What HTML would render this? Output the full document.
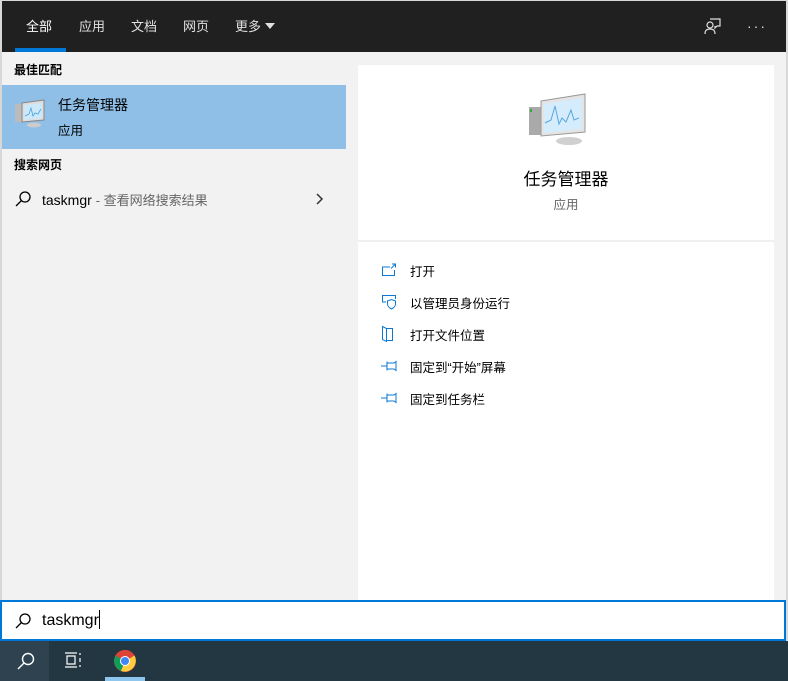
<!DOCTYPE html>
<html><head><meta charset="utf-8"><style>
*{margin:0;padding:0;box-sizing:border-box}
body{width:788px;height:681px;overflow:hidden;background:#d8d8d8;font-family:"Liberation Sans","Noto Sans CJK SC",sans-serif;position:relative}
.abs{position:absolute}
#hdr{left:2px;top:1px;width:784px;height:51px;background:#202020}
.tab{position:absolute;top:15px;color:#e0e0e0;font-size:13px}
#body{left:2px;top:52px;width:784px;height:549px;background:#f2f2f2}
#right{left:358px;top:65px;width:416px;height:536px;background:#fff}
.sec{position:absolute;left:14px;font-size:12px;font-weight:bold;color:#000}
.act{position:absolute;left:410px;font-size:12.5px;color:#000}
.ico{position:absolute;left:381px}
</style></head><body>
<div class="abs" id="hdr">
 <div class="tab" style="left:24px;color:#fff">全部</div>
 <div class="abs" style="left:13px;top:47px;width:51px;height:4px;background:#0078d7"></div>
 <div class="tab" style="left:77px">应用</div>
 <div class="tab" style="left:129px">文档</div>
 <div class="tab" style="left:181px">网页</div>
 <div class="tab" style="left:233px">更多 <span style="display:inline-block;width:0;height:0;border-left:5px solid transparent;border-right:5px solid transparent;border-top:6px solid #e0e0e0;vertical-align:2px"></span></div>
 <svg class="abs" style="left:700px;top:15px" width="20" height="20" viewBox="0 0 20 20" fill="none" stroke="#e0e0e0" stroke-width="1.2"><path d="M8 3h10v7h-3l-2 2v-2"/><circle cx="8" cy="9" r="3"/><path d="M3 18c0-4 2-5 5-5s5 1 5 5"/></svg>
 <div class="abs" style="left:745px;top:17px;color:#e0e0e0;font-size:14px;letter-spacing:2px">···</div>
</div>
<div class="abs" id="body"></div>
<div class="sec" style="top:61px">最佳匹配</div>
<div class="abs" style="left:2px;top:85px;width:344px;height:64px;background:#8fbfe6"></div>
<svg class="abs" style="left:14px;top:98px" width="32" height="30" viewBox="0 0 32 30"><rect x="1" y="6" width="8" height="18" fill="#bbb"/><path d="M8 5l22-3v20l-22 2z" fill="#ddd" stroke="#888"/><path d="M10 7l18-2v15l-18 2z" fill="#cde8f8"/><path d="M11 18l4-2 2-6 2 8 2-3 3 1 3-5" stroke="#4aa3df" fill="none" stroke-width=".8"/><ellipse cx="20" cy="27" rx="7" ry="2.5" fill="#ccc"/></svg>
<div class="abs" style="left:58px;top:95px;font-size:14px">任务管理器</div>
<div class="abs" style="left:58px;top:120px;font-size:12.5px">应用</div>
<div class="sec" style="top:156px">搜索网页</div>
<svg class="abs" style="left:14px;top:190px" width="18" height="18" viewBox="0 0 18 18" fill="none" stroke="#000" stroke-width="1.3"><circle cx="11" cy="7" r="5"/><path d="M7.5 10.5L2 16"/></svg>
<div class="abs" style="left:42px;top:190px;font-size:14px">taskmgr <span style="color:#666;font-size:13px">- 查看网络搜索结果</span></div>
<svg class="abs" style="left:315px;top:192px" width="10" height="14" viewBox="0 0 10 14" fill="none" stroke="#333" stroke-width="1.5"><path d="M2 2l5 5-5 5"/></svg>
<div class="abs" id="right"></div>
<svg class="abs" style="left:527px;top:93px" width="64" height="52" viewBox="0 0 64 52"><rect x="2" y="14" width="12" height="28" fill="#aaa"/><rect x="3" y="16" width="2" height="3" fill="#3a3"/><path d="M14 8l44-7v38l-44 4z" fill="#e4e4e4" stroke="#999"/><path d="M17 11l38-6v31l-38 4z" fill="#d4ecfb"/><path d="M18 30l6-3 4-14 4 18 3-6 4 4 5-12 3 10 5-2" stroke="#5aa8e0" fill="none"/><ellipse cx="42" cy="48" rx="13" ry="4" fill="#d0d0d0"/></svg>
<div class="abs" style="left:0;width:1132px;top:165px;text-align:center;font-size:17px;color:#000">任务管理器</div>
<div class="abs" style="left:0;width:1132px;top:194px;text-align:center;font-size:12.5px;color:#666">应用</div>
<div class="abs" style="left:358px;top:240px;width:416px;height:2px;background:#f0f0f0"></div>
<svg class="ico" style="top:263px" width="16" height="14" viewBox="0 0 16 14" fill="none" stroke="#0a78d4"><path d="M9 4H1.5v8.5h12V7"/><path d="M11 1h3.5v3.5M14.5 1L10 5.5"/></svg>
<div class="act" style="top:261px">打开</div>
<svg class="ico" style="top:294px" width="16" height="16" viewBox="0 0 16 16" fill="none" stroke="#0a78d4"><path d="M5 8H1.5V1.5h13V5"/><path d="M6.5 7l4-1.5 4 1.5v3c0 2-2 4-4 5-2-1-4-3-4-5z"/></svg>
<div class="act" style="top:293px">以管理员身份运行</div>
<svg class="ico" style="top:325px" width="14" height="18" viewBox="0 0 14 18" fill="none" stroke="#0a78d4"><path d="M1.5 1.5l4 2v13l-4-2zM5.5 3.5h6v12h-6"/></svg>
<div class="act" style="top:325px">打开文件位置</div>
<svg class="ico" style="top:360px" width="18" height="12" viewBox="0 0 18 12" fill="none" stroke="#0a78d4"><path d="M0 6h6M6 1.5v9M6 3h7l2-1.5v9L13 9H6"/></svg>
<div class="act" style="top:357px">固定到“开始”屏幕</div>
<svg class="ico" style="top:392px" width="18" height="12" viewBox="0 0 18 12" fill="none" stroke="#0a78d4"><path d="M0 6h6M6 1.5v9M6 3h7l2-1.5v9L13 9H6"/></svg>
<div class="act" style="top:389px">固定到任务栏</div>
<div class="abs" style="left:0;top:600px;width:786px;height:41px;background:#fff;border:2px solid #0078d7"></div>
<svg class="abs" style="left:14px;top:612px" width="18" height="18" viewBox="0 0 18 18" fill="none" stroke="#000" stroke-width="1.3"><circle cx="11" cy="7" r="5"/><path d="M7.5 10.5L2 16"/></svg>
<div class="abs" style="left:42px;top:610px;font-size:16px">taskmgr<span style="display:inline-block;width:1px;height:19px;background:#000;vertical-align:-4px"></span></div>
<div class="abs" style="left:0;top:641px;width:788px;height:40px;background:#233743"></div>
<div class="abs" style="left:0;top:641px;width:49px;height:40px;background:#2e434f"></div>
<svg class="abs" style="left:16px;top:651px" width="20" height="20" viewBox="0 0 20 20" fill="none" stroke="#fff" stroke-width="1.4"><circle cx="12" cy="8" r="5.5"/><path d="M8 12l-6 6"/></svg>
<svg class="abs" style="left:64px;top:652px" width="20" height="16" viewBox="0 0 20 16" fill="none" stroke="#fff" stroke-width="1.2"><path d="M1 1h12M1 15h12M3 4h8v8H3zM16 1v2M16 6v4M16 13v2"/></svg>
<div class="abs" style="left:105px;top:677px;width:40px;height:4px;background:#8ec6ee"></div>
<svg class="abs" style="left:113px;top:649px" width="24" height="24" viewBox="0 0 24 24"><circle cx="12" cy="12" r="11" fill="#db4437"/><path d="M12 12L2.5 6.5A11 11 0 0 0 8 22z" fill="#0f9d58"/><path d="M12 12l9.5-5.5A11 11 0 0 1 8 22z" fill="#ffcd40"/><path d="M12 12L2.5 6.5A11 11 0 0 1 21.5 6.5z" fill="#db4437"/><circle cx="12" cy="12" r="5" fill="#fff"/><circle cx="12" cy="12" r="4" fill="#4285f4"/></svg>
</body></html>
